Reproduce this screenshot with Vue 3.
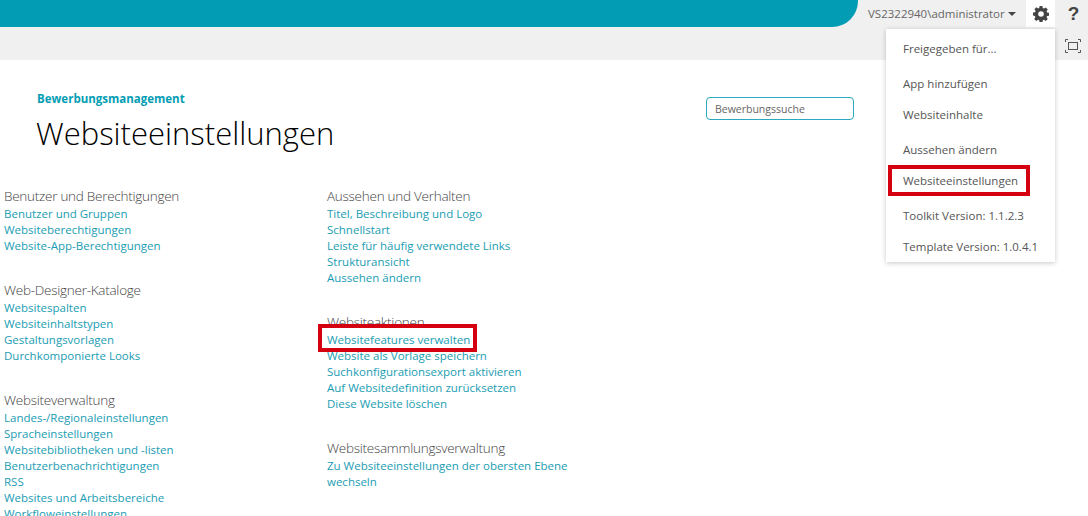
<script setup>
const col1 = [
  { title: 'Benutzer und Berechtigungen', links: ['Benutzer und Gruppen', 'Websiteberechtigungen', 'Website-App-Berechtigungen'] },
  { title: 'Web-Designer-Kataloge', links: ['Websitespalten', 'Websiteinhaltstypen', 'Gestaltungsvorlagen', 'Durchkomponierte Looks'] },
  { title: 'Websiteverwaltung', links: ['Landes-/Regionaleinstellungen', 'Spracheinstellungen', 'Websitebibliotheken und -listen', 'Benutzerbenachrichtigungen', 'RSS', 'Websites und Arbeitsbereiche', 'Workfloweinstellungen'] },
]
const col2 = [
  { title: 'Aussehen und Verhalten', links: ['Titel, Beschreibung und Logo', 'Schnellstart', 'Leiste für häufig verwendete Links', 'Strukturansicht', 'Aussehen ändern'] },
  { title: 'Websiteaktionen', links: ['Websitefeatures verwalten', 'Website als Vorlage speichern', 'Suchkonfigurationsexport aktivieren', 'Auf Websitedefinition zurücksetzen', 'Diese Website löschen'] },
  { title: 'Websitesammlungsverwaltung', links: ['Zu Websiteeinstellungen der obersten Ebene wechseln'] },
]
const menu = [
  { label: 'Freigegeben für...', cls: 'm1' },
  { label: 'App hinzufügen', cls: 'm2' },
  { label: 'Websiteinhalte', cls: 'm3' },
  { label: 'Aussehen ändern', cls: 'm4' },
  { label: 'Websiteeinstellungen', cls: 'm5', mark: true },
  { label: 'Toolkit Version: 1.1.2.3', cls: 'm6' },
  { label: 'Template Version: 1.0.4.1', cls: 'm7' },
]
</script>

<template>
  <div class="page">
    <header class="top">
      <div class="brand"></div>
      <div class="user">VS2322940\administrator<span class="caret"></span></div>
      <div class="gear">
        <svg width="16" height="16" viewBox="0 0 16 16"><path fill="#444" fill-rule="evenodd" d="M6.6 0h2.8l.4 2.1 1.2.5 1.800-1.200 2 2-1.200 1.800.5 1.200 2.100.4v2.800l-2.100.4-.5 1.200 1.200 1.800-2 2-1.800-1.200-1.200.5-.4 2.100H6.600l-.4-2.100-1.200-.5-1.800 1.200-2-2 1.200-1.800-.5-1.200L0 9.400V6.600l2.100-.4.5-1.200L1.400 3.200l2-2L5.200 2.600l1-.5zM8 5.200a2.800 2.800 0 1 0 0 5.600 2.800 2.800 0 0 0 0-5.600z"/></svg>
      </div>
      <div class="help">?</div>
    </header>
    <div class="strip">
      <svg class="focus" width="16" height="14" viewBox="0 0 16 14" fill="none" stroke="#555">
        <rect x="3.5" y="3.5" width="9" height="7" stroke-width="1"/>
        <path d="M.5 3V.5H3M13 .5h2.500V3M15.500 11v2.500H13M3 13.500H.5V11"/>
      </svg>
    </div>
    <main class="content">
      <div class="head">
        <div>
          <div class="crumb">Bewerbungsmanagement</div>
          <h1>Websiteeinstellungen</h1>
        </div>
        <div class="search">Bewerbungssuche</div>
      </div>
      <div class="cols">
        <div class="col col-a">
          <section v-for="g in col1" :key="g.title" class="group">
            <h2>{{ g.title }}</h2>
            <a v-for="l in g.links" :key="l">{{ l }}</a>
          </section>
        </div>
        <div class="col col-b">
          <section v-for="g in col2" :key="g.title" class="group">
            <h2>{{ g.title }}</h2>
            <a v-for="l in g.links" :key="l" :class="{ marked: l === 'Websitefeatures verwalten' }">{{ l }}</a>
          </section>
        </div>
      </div>
    </main>
    <nav class="menu">
      <div v-for="m in menu" :key="m.label" class="item" :class="[m.cls, { marked: m.mark }]">{{ m.label }}</div>
    </nav>
  </div>
</template>

<style>
html, body { margin: 0; background: #fff; overflow: hidden; }
</style>

<style scoped>
.page {
  position: relative;
  width: 1088px;
  height: 516px;
  overflow: hidden;
  background: #fff;
  font-family: "Open Sans", "Noto Sans", sans-serif;
  font-size: 12px;
  color: #444;
}
.top {
  display: flex;
  height: 27px;
  background: #f0f0f0;
}
.brand {
  width: 858px;
  background: #029db4;
  border-bottom-right-radius: 26px;
}
.user {
  width: 168px;
  box-sizing: border-box;
  padding-left: 10px;
  line-height: 27px;
  font-size: 11.5px;
  color: #666;
  white-space: nowrap;
}
.caret {
  display: inline-block;
  margin-left: 3px;
  vertical-align: 2px;
  border: 4px solid transparent;
  border-top-color: #444;
  border-bottom-width: 0;
}
.gear {
  width: 29px;
  background: #fff;
  display: flex;
  align-items: center;
  justify-content: center;
}
.help {
  flex: 1;
  text-align: center;
  font-family: "Liberation Sans", sans-serif;
  font-weight: 700;
  font-size: 19px;
  line-height: 27px;
  color: #444;
  padding-left: 4px;
}
.strip {
  height: 33px;
  background: #f0f0f0;
  position: relative;
}
.focus {
  position: absolute;
  left: 1065px;
  top: 12px;
}
.content {
  padding-top: 30px;
}
.head {
  display: flex;
  justify-content: space-between;
  align-items: flex-start;
  padding-left: 37px;
  width: 854px;
  box-sizing: border-box;
}
.crumb {
  font-weight: 700;
  font-size: 11.5px;
  line-height: 18px;
  color: #029db4;
}
h1 {
  margin: 3px 0 0 -1px;
  font-weight: 300;
  font-size: 31px;
  line-height: 44px;
  color: #000;
  white-space: nowrap;
}
.search {
  width: 148px;
  height: 23px;
  margin-top: 7px;
  box-sizing: border-box;
  border: 1px solid #2ba9bf;
  border-radius: 4px;
  padding-left: 8px;
  line-height: 22px;
  font-size: 10.500px;
  color: #666;
}
.cols {
  display: flex;
  margin-top: 32px;
}
.col-a {
  width: 327px;
  padding-left: 4px;
  box-sizing: border-box;
}
.col-b {
  width: 250px;
}
.group {
  margin-bottom: 27px;
}
h2 {
  margin: 0 0 1px;
  font-weight: 300;
  font-size: 13.500px;
  line-height: 18px;
  letter-spacing: -0.26px;
  color: #444;
  white-space: nowrap;
}
a {
  display: block;
  font-size: 11.5px;
  line-height: 16px;
  color: #1a9db3;
}
a.marked {
  position: relative;
  z-index: 1;
  width: max-content;
}
a.marked::after {
  content: "";
  position: absolute;
  left: -9px;
  right: -7px;
  top: -8px;
  bottom: -4px;
  border: 4px solid #d4000f;
}
.menu {
  position: absolute;
  left: 886px;
  top: 29px;
  width: 169px;
  height: 233px;
  background: #fff;
  box-shadow: 0 1px 5px rgba(0, 0, 0, 0.22);
  display: flex;
  flex-direction: column;
  padding-left: 17px;
  box-sizing: border-box;
  font-size: 11.5px;
  color: #555;
}
.item {
  line-height: 16px;
  position: relative;
  width: max-content;
}
.m1 { margin-top: 12px; }
.m2 { margin-top: 19px; }
.m3 { margin-top: 15px; }
.m4 { margin-top: 19px; }
.m5 { margin-top: 15px; }
.m6 { margin-top: 19px; }
.m7 { margin-top: 15px; }
.item.marked::after {
  content: "";
  position: absolute;
  left: -15px;
  right: -12px;
  top: -8px;
  bottom: -7px;
  border: 4px solid #d4000f;
}
</style>
